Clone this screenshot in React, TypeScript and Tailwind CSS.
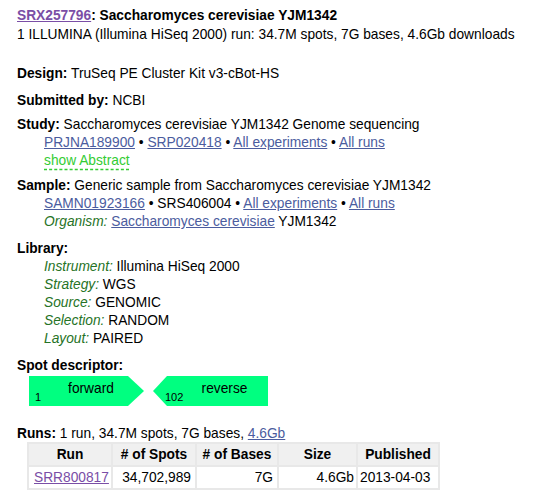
import React from "react";

const link = "text-[#4b5c9e] underline";
const visited = "text-[#7a4ea6] underline";
const label = "italic text-[#267326]";

function SpotBox({ name, start, dir }: { name: string; start: string; dir: "f" | "r" }) {
  const shape =
    dir === "f"
      ? "[clip-path:polygon(0_0,99px_0,115px_50%,99px_100%,0_100%)]"
      : "[clip-path:polygon(14px_0,100%_0,100%_100%,14px_100%,0_50%)]";
  return (
    <div className={`relative h-[30px] w-[115px] bg-[#00ff80] ${shape}`}>
      <div className={`pt-[4px] text-center leading-[18px] ${dir === "f" ? "pl-[9px]" : "pl-[28px]"}`}>
        {name}
      </div>
      <span className={`absolute bottom-[2px] text-[11px] leading-[13px] ${dir === "f" ? "left-[6px]" : "left-[12px]"}`}>
        {start}
      </span>
    </div>
  );
}

const cell = "border-2 border-[#e8e8e8]";

export default function App() {
  const head = ["Run", "# of Spots", "# of Bases", "Size", "Published"];
  return (
    <div className="min-h-screen bg-white px-[17px] pt-[7px] font-['Liberation_Sans',Arial,sans-serif] text-[13.75px] leading-[18px] text-black">
      <div className="font-bold">
        <a className={visited}>SRX257796</a>: Saccharomyces cerevisiae YJM1342
      </div>
      <div className="mt-[1px]">1 ILLUMINA (Illumina HiSeq 2000) run: 34.7M spots, 7G bases, 4.6Gb downloads</div>

      <div className="mt-[21px]">
        <b>Design:</b> TruSeq PE Cluster Kit v3-cBot-HS
      </div>
      <div className="mt-[9px]">
        <b>Submitted by:</b> NCBI
      </div>

      <div className="mt-[6px]">
        <div>
          <b>Study:</b> Saccharomyces cerevisiae YJM1342 Genome sequencing
        </div>
        <div className="pl-[27px]">
          <div>
            <a className={link}>PRJNA189900</a> • <a className={link}>SRP020418</a> •{" "}
            <a className={link}>All experiments</a> • <a className={link}>All runs</a>
          </div>
          <div>
            <span className="text-[#33cc33] underline decoration-dashed decoration-[#33cc33] underline-offset-[4px]">
              show Abstract
            </span>
          </div>
        </div>
      </div>

      <div className="mt-[7px]">
        <div>
          <b>Sample:</b> Generic sample from Saccharomyces cerevisiae YJM1342
        </div>
        <div className="pl-[27px]">
          <div>
            <a className={link}>SAMN01923166</a> • SRS406004 • <a className={link}>All experiments</a> •{" "}
            <a className={link}>All runs</a>
          </div>
          <div>
            <span className={label}>Organism:</span> <a className={link}>Saccharomyces cerevisiae</a> YJM1342
          </div>
        </div>
      </div>

      <div className="mt-[9px]">
        <div>
          <b>Library:</b>
        </div>
        <div className="pl-[27px]">
          <div>
            <span className={label}>Instrument:</span> Illumina HiSeq 2000
          </div>
          <div>
            <span className={label}>Strategy:</span> WGS
          </div>
          <div>
            <span className={label}>Source:</span> GENOMIC
          </div>
          <div>
            <span className={label}>Selection:</span> RANDOM
          </div>
          <div>
            <span className={label}>Layout:</span> PAIRED
          </div>
        </div>
      </div>

      <div className="mt-[9px]">
        <div>
          <b>Spot descriptor:</b>
        </div>
        <div className="ml-[12px] mt-[1px] flex gap-[9px]">
          <SpotBox name="forward" start="1" dir="f" />
          <SpotBox name="reverse" start="102" dir="r" />
        </div>
      </div>

      <div className="mt-[19px]">
        <b>Runs:</b> 1 run, 34.7M spots, 7G bases, <a className={link}>4.6Gb</a>
      </div>
      <table className="-mt-px ml-[10px] w-[411px] table-fixed border-collapse">
        <colgroup>
          <col className="w-[84px]" />
          <col className="w-[84px]" />
          <col className="w-[82px]" />
          <col className="w-[79px]" />
          <col className="w-[82px]" />
        </colgroup>
        <thead>
          <tr className="bg-[#f0f0f0]">
            {head.map((h) => (
              <th key={h} className={`h-[23px] ${cell} px-[2px] text-center font-bold`}>
                {h}
              </th>
            ))}
          </tr>
        </thead>
        <tbody>
          <tr>
            <td className={`h-[23px] ${cell} pl-[5px] text-left`}>
              <a className={visited}>SRR800817</a>
            </td>
            <td className={`${cell} pr-[4px] text-right`}>34,702,989</td>
            <td className={`${cell} pr-[4px] text-right`}>7G</td>
            <td className={`${cell} pr-[2px] text-right`}>4.6Gb</td>
            <td className={`${cell} pl-[2px] text-left`}>2013-04-03</td>
          </tr>
        </tbody>
      </table>
    </div>
  );
}
